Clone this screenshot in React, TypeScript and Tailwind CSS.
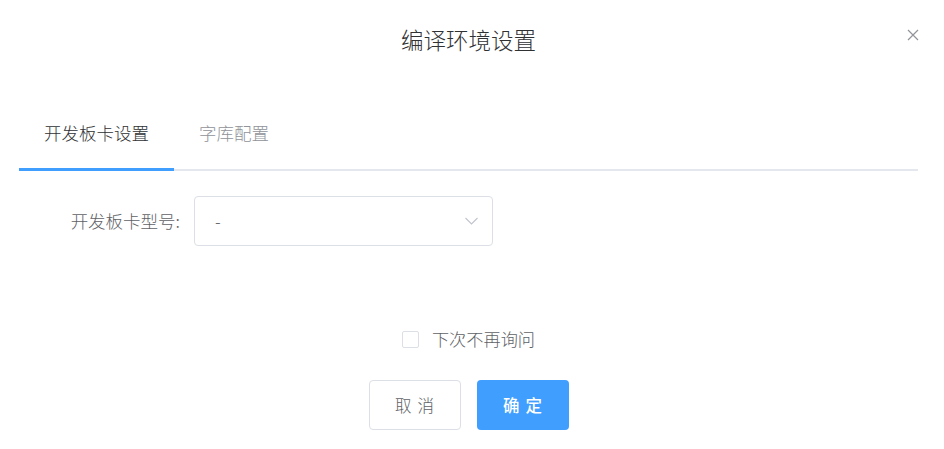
const font = { fontFamily: '"Noto Sans CJK SC", "Noto Sans", sans-serif' };

const App = () => {
  return (
    <div
      className="relative w-[944px] h-[449px] bg-white pl-[19px] pr-[26px] font-light"
      style={font}
    >
      <div className="pt-[22px]">
        <div className="h-[34px] leading-[34px] text-center text-[22.5px] text-[#303133]">
          编译环境设置
        </div>
      </div>
      <button className="absolute left-[907px] top-[29px] w-[12px] h-[12px] flex items-center justify-center">
        <svg width="12" height="12" viewBox="0 0 12 12" fill="none">
          <path d="M1 1L11 11M11 1L1 11" stroke="#909399" strokeWidth="1.2" />
        </svg>
      </button>

      <div className="mt-[65px] flex border-b-2 border-[#e4e7ed]">
        <div className="px-[25px] pb-[23px] border-b-[3px] border-[#409eff] mb-[-2px] text-[17.5px] leading-[24px] text-[#303133]">
          开发板卡设置
        </div>
        <div className="px-[25px] pb-[23px] text-[17.5px] leading-[24px] text-[#909399]">
          字库配置
        </div>
      </div>

      <div className="mt-[25px] flex items-center">
        <div className="w-[161px] text-right text-[17.5px] text-[#606266] leading-[24px]">
          开发板卡型号:
        </div>
        <div className="ml-[14px] w-[299px] h-[50px] border border-[#dcdfe6] rounded-[4px] flex items-center justify-between pl-[20px] pr-[14px]">
          <span className="text-[17px] text-[#606266]">-</span>
          <svg width="13" height="8" viewBox="0 0 13 8" fill="none">
            <path d="M0.5 1L6.5 7L12.5 1" stroke="#c0c4cc" strokeWidth="1.1" />
          </svg>
        </div>
      </div>

      <div className="mt-[81px] flex items-center justify-center h-[24px]">
        <span className="w-[17px] h-[17px] border border-[#dcdfe6] rounded-[2px] bg-white" />
        <span className="ml-[13px] text-[17.2px] text-[#606266] leading-[24px]">
          下次不再询问
        </span>
      </div>

      <div className="mt-[29px] flex justify-center gap-[16px]">
        <button className="w-[92px] h-[50px] border border-[#dcdfe6] rounded-[4px] bg-white flex items-center justify-center gap-[6px] text-[16.5px] text-[#606266]">
          <span>取</span>
          <span>消</span>
        </button>
        <button className="w-[92px] h-[50px] rounded-[4px] bg-[#409eff] flex items-center justify-center gap-[6px] text-[16.5px] font-medium text-white">
          <span>确</span>
          <span>定</span>
        </button>
      </div>
    </div>
  );
};

export default App;
